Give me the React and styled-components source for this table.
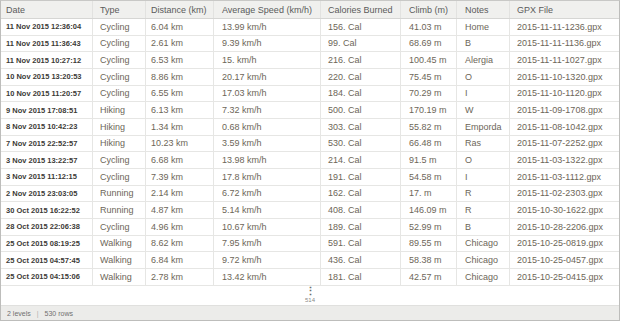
import React from 'react';
import styled, { createGlobalStyle } from 'styled-components';

const GlobalStyle = createGlobalStyle`
  html, body {
    margin: 0;
    padding: 0;
    background: #ffffff;
  }
  * {
    box-sizing: border-box;
  }
`;

const COLUMNS = '92px 53px 68px 107px 80px 56px 53px 1fr';

const Frame = styled.div`
  width: 620px;
  height: 321px;
  border: 1px solid #bdbdbb;
  border-top-color: #c8c8c6;
  display: flex;
  flex-direction: column;
  font-family: "Liberation Sans", Arial, sans-serif;
  background: #fff;
  overflow: hidden;
`;

const HeaderRow = styled.div`
  display: grid;
  grid-template-columns: ${COLUMNS};
  height: 18px;
  flex: none;
  background: #f0f0ee;
  border-bottom: 1px solid #d6d6d4;
`;

const HeaderCell = styled.div`
  display: flex;
  align-items: center;
  padding-left: ${p => p.$pad || 7}px;
  font-size: 9px;
  color: #5b5b5b;
  border-right: ${p => (p.$last ? 'none' : '1px solid #e2e2e0')};
  white-space: nowrap;
`;

const Row = styled.div`
  display: grid;
  grid-template-columns: ${COLUMNS};
  height: 16.667px;
  flex: none;
  border-bottom: 1px solid #e6e6e4;
`;

const Cell = styled.div`
  display: flex;
  align-items: center;
  padding-left: ${p => p.$pad || 7}px;
  font-size: 9px;
  color: #6d6658;
  border-right: ${p => (p.$last ? 'none' : '1px solid #e6e6e4')};
  white-space: nowrap;
  overflow: hidden;
`;

const DateCell = styled(Cell)`
  font-size: 7.5px;
  font-weight: bold;
  color: #3c3a36;
`;

const More = styled.div`
  flex: 1;
  display: flex;
  flex-direction: column;
  align-items: center;
  justify-content: center;
  color: #6f6f6d;
  line-height: 1;
`;

const Dots = styled.span`
  font-size: 11px;
  font-weight: bold;
  line-height: 9px;
`;

const MoreCount = styled.span`
  font-size: 6px;
  margin-top: 1px;
  color: #8a8a88;
`;

const Footer = styled.div`
  height: 15px;
  flex: none;
  display: flex;
  align-items: center;
  gap: 6px;
  padding-left: 6px;
  background: #ececea;
  border-top: 1px solid #e0e0de;
  font-size: 7px;
  color: #707070;
`;

const Sep = styled.span`
  color: #b0b0ae;
`;

const headers = [
  'Date',
  'Type',
  'Distance (km)',
  'Average Speed (km/h)',
  'Calories Burned',
  'Climb (m)',
  'Notes',
  'GPX File',
];

const rows = [
  ['11 Nov 2015 12:36:04', 'Cycling', '6.04 km', '13.99 km/h', '156. Cal', '41.03 m', 'Home', '2015-11-11-1236.gpx'],
  ['11 Nov 2015 11:36:43', 'Cycling', '2.61 km', '9.39 km/h', '99. Cal', '68.69 m', 'B', '2015-11-11-1136.gpx'],
  ['11 Nov 2015 10:27:12', 'Cycling', '6.53 km', '15. km/h', '216. Cal', '100.45 m', 'Alergia', '2015-11-11-1027.gpx'],
  ['10 Nov 2015 13:20:53', 'Cycling', '8.86 km', '20.17 km/h', '220. Cal', '75.45 m', 'O', '2015-11-10-1320.gpx'],
  ['10 Nov 2015 11:20:57', 'Cycling', '6.55 km', '17.03 km/h', '184. Cal', '70.29 m', 'I', '2015-11-10-1120.gpx'],
  ['9 Nov 2015 17:08:51', 'Hiking', '6.13 km', '7.32 km/h', '500. Cal', '170.19 m', 'W', '2015-11-09-1708.gpx'],
  ['8 Nov 2015 10:42:23', 'Hiking', '1.34 km', '0.68 km/h', '303. Cal', '55.82 m', 'Emporda', '2015-11-08-1042.gpx'],
  ['7 Nov 2015 22:52:57', 'Hiking', '10.23 km', '3.59 km/h', '530. Cal', '66.48 m', 'Ras', '2015-11-07-2252.gpx'],
  ['3 Nov 2015 13:22:57', 'Cycling', '6.68 km', '13.98 km/h', '214. Cal', '91.5 m', 'O', '2015-11-03-1322.gpx'],
  ['3 Nov 2015 11:12:15', 'Cycling', '7.39 km', '17.8 km/h', '191. Cal', '54.58 m', 'I', '2015-11-03-1112.gpx'],
  ['2 Nov 2015 23:03:05', 'Running', '2.14 km', '6.72 km/h', '162. Cal', '17. m', 'R', '2015-11-02-2303.gpx'],
  ['30 Oct 2015 16:22:52', 'Running', '4.87 km', '5.14 km/h', '408. Cal', '146.09 m', 'R', '2015-10-30-1622.gpx'],
  ['28 Oct 2015 22:06:38', 'Cycling', '4.96 km', '10.67 km/h', '189. Cal', '52.99 m', 'B', '2015-10-28-2206.gpx'],
  ['25 Oct 2015 08:19:25', 'Walking', '8.62 km', '7.95 km/h', '591. Cal', '89.55 m', 'Chicago', '2015-10-25-0819.gpx'],
  ['25 Oct 2015 04:57:45', 'Walking', '6.84 km', '9.72 km/h', '436. Cal', '58.38 m', 'Chicago', '2015-10-25-0457.gpx'],
  ['25 Oct 2015 04:15:06', 'Walking', '2.78 km', '13.42 km/h', '181. Cal', '42.57 m', 'Chicago', '2015-10-25-0415.gpx'],
];

// left padding per column, read off the screenshot
const pads = [5, 7, 5, 8, 7, 8, 8, 7];

const App = () => (
  <>
    <GlobalStyle />
    <Frame>
      <HeaderRow>
        {headers.map((h, i) => (
          <HeaderCell key={h} $pad={pads[i]} $last={i === headers.length - 1}>
            {h}
          </HeaderCell>
        ))}
      </HeaderRow>
      {rows.map(r => (
        <Row key={r[7]}>
          {r.map((v, i) =>
            i === 0 ? (
              <DateCell key={i} $pad={pads[i]}>{v}</DateCell>
            ) : (
              <Cell key={i} $pad={pads[i]} $last={i === r.length - 1}>{v}</Cell>
            )
          )}
        </Row>
      ))}
      <More>
        <Dots>⋮</Dots>
        <MoreCount>514</MoreCount>
      </More>
      <Footer>
        <span>2 levels</span>
        <Sep>|</Sep>
        <span>530 rows</span>
      </Footer>
    </Frame>
  </>
);

export default App;
